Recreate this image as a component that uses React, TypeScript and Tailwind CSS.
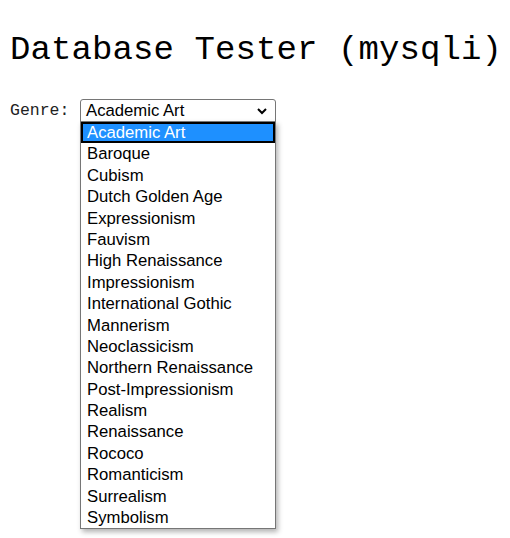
const genres = [
  'Academic Art',
  'Baroque',
  'Cubism',
  'Dutch Golden Age',
  'Expressionism',
  'Fauvism',
  'High Renaissance',
  'Impressionism',
  'International Gothic',
  'Mannerism',
  'Neoclassicism',
  'Northern Renaissance',
  'Post-Impressionism',
  'Realism',
  'Renaissance',
  'Rococo',
  'Romanticism',
  'Surrealism',
  'Symbolism',
];

export default function App() {
  return (
    <div className="min-h-[538px] w-[510px] bg-white text-black">
      <h1 className="pl-[10px] pt-[27px] font-['Liberation_Mono',monospace] text-[34px] leading-[46px] tracking-[0.1px]">
        Database Tester (mysqli)
      </h1>

      <div className="mt-[26px] flex items-center pl-[10px]">
        <label className="w-[70px] font-['Liberation_Mono',monospace] text-[16.5px] leading-[20px] text-[#222]">
          Genre:
        </label>

        <div className="relative">
          {/* Closed select */}
          <div className="flex h-[24px] w-[196px] items-center justify-between rounded-t-[3px] border border-[#767676] bg-white pl-[5px] pr-[8px] font-['Liberation_Sans',Arial,sans-serif] text-[16.7px]">
            <span>Academic Art</span>
            <svg width="10" height="7" viewBox="0 0 10 7" fill="none">
              <path d="M1 1l4 4 4-4" stroke="#000" strokeWidth="2" />
            </svg>
          </div>

          {/* Open list */}
          <div className="absolute left-0 top-[22px] w-[196px] border border-[#767676] bg-white shadow-[2px_3px_5px_rgba(0,0,0,0.3)] font-['Liberation_Sans',Arial,sans-serif] text-[16.7px]">
            {genres.map((g, i) => (
              <div
                key={g}
                className={
                  i === 0
                    ? 'h-[21.4px] border-2 border-black bg-[#1e90ff] pl-[4px] leading-[17px] text-white'
                    : 'h-[21.4px] pl-[6px] leading-[21.4px]'
                }
              >
                {g}
              </div>
            ))}
          </div>
        </div>
      </div>
    </div>
  );
}
